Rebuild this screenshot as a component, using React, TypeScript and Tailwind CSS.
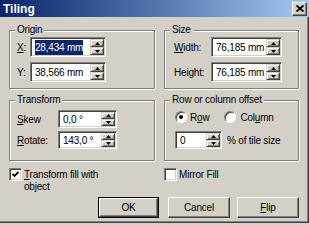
import React from 'react';

const raised =
  'border border-t-white border-l-white border-r-[#404040] border-b-[#404040] shadow-[inset_-1px_-1px_0_#808080]';
const sunken =
  'border border-t-[#808080] border-l-[#808080] border-r-white border-b-white shadow-[inset_1px_1px_0_#404040,inset_-1px_-1px_0_#d4d0c8]';

function Arrow({ up }: { up?: boolean }) {
  return (
    <svg width="5" height="3" viewBox="0 0 5 3">
      <path d={up ? 'M2.5 0L5 3H0z' : 'M0 0H5L2.5 3z'} fill="#000" />
    </svg>
  );
}

function SpinHalf({ up }: { up?: boolean }) {
  return (
    <div className="flex-1 flex items-center justify-center bg-[#d4d0c8] border border-t-[#d4d0c8] border-l-[#d4d0c8] border-r-[#404040] border-b-[#404040] shadow-[inset_1px_1px_0_#fff,inset_-1px_-1px_0_#808080]">
      <Arrow up={up} />
    </div>
  );
}

function SpinBox({ value, size, selected }: { value: string; size: string; selected?: boolean }) {
  return (
    <div className={`${size} ${sunken} bg-white flex items-stretch p-[1px]`}>
      <div className="flex-1 flex items-center pl-[3px] overflow-hidden whitespace-nowrap">
        <span className={selected ? 'bg-[#0a246a] text-white' : 'text-black'}>{value}</span>
      </div>
      <div className="w-[14px] flex flex-col">
        <SpinHalf up />
        <SpinHalf />
      </div>
    </div>
  );
}

function Group({ legend, className, children }: { legend: string; className: string; children: React.ReactNode }) {
  return (
    <fieldset className={`border border-[#808080] shadow-[inset_1px_1px_0_#fff,1px_1px_0_#fff] ${className}`}>
      <legend className="ml-[5px] px-[2px] leading-[12px] bg-[#d4d0c8]">{legend}</legend>
      {children}
    </fieldset>
  );
}

function Check({ checked }: { checked?: boolean }) {
  return (
    <div className={`w-[13px] h-[13px] shrink-0 bg-white ${sunken} flex items-center justify-center`}>
      {checked && (
        <svg width="7" height="7" viewBox="0 0 7 7">
          <path d="M0.5 3 L2.5 5 L6.5 1" stroke="#000" strokeWidth="1.8" fill="none" />
        </svg>
      )}
    </div>
  );
}

function Radio({ checked }: { checked?: boolean }) {
  return (
    <div className="w-[12px] h-[12px] rounded-full bg-white border border-t-[#808080] border-l-[#808080] border-r-white border-b-white shadow-[inset_1px_1px_0_#404040] flex items-center justify-center">
      {checked && <div className="w-[4px] h-[4px] rounded-full bg-black" />}
    </div>
  );
}

function Button({ children, isDefault, className }: { children: React.ReactNode; isDefault?: boolean; className: string }) {
  return (
    <div className={`${className} h-[21px] ${isDefault ? 'border border-black' : ''} flex`}>
      <div className={`flex-1 ${raised} bg-[#d4d0c8] flex items-center justify-center`}>{children}</div>
    </div>
  );
}

export default function App() {
  return (
    <div className="w-[309px] h-[225px] bg-[#d4d0c8] font-['Liberation_Sans',Arial,sans-serif] text-[10px] tracking-[-0.2px] text-black overflow-hidden">
      <div className="h-[223px] flex flex-col">
        {/* Title bar */}
        <div className="h-[17px] bg-gradient-to-r from-[#0a246a] to-[#a6caf0] flex items-center justify-between pl-[3px] pr-[2px]">
          <span className="text-white font-bold text-[12px] tracking-normal">Tiling</span>
          <div className={`w-[15px] h-[14px] bg-[#d4d0c8] ${raised} flex items-center justify-center`}>
            <svg width="8" height="7" viewBox="0 0 8 7">
              <path d="M0.5 0.5L7.5 6.5M7.5 0.5L0.5 6.5" stroke="#000" strokeWidth="1.8" />
            </svg>
          </div>
        </div>

        {/* Body */}
        <div className="flex-1 pl-[9px] border-r border-b border-[#404040] shadow-[inset_-1px_-1px_0_#808080]">
          <div className="grid grid-cols-[146px_135px] gap-x-[9px] gap-y-[5px] mt-[7px]">
            <Group legend="Origin" className="h-[65px]">
              <div className="flex flex-col gap-[5px] pt-[1px] pl-[7px]">
                <div className="flex items-center">
                  <span className="w-[13px]"><span className="underline">X</span>:</span>
                  <SpinBox value="28,434 mm" size="w-[76px] h-[20px]" selected />
                </div>
                <div className="flex items-center">
                  <span className="w-[13px]">Y:</span>
                  <SpinBox value="38,566 mm" size="w-[76px] h-[20px]" />
                </div>
              </div>
            </Group>
            <Group legend="Size" className="h-[65px]">
              <div className="flex flex-col gap-[5px] pt-[1px] pl-[9px]">
                <div className="flex items-center">
                  <span className="w-[37px]"><span className="underline">W</span>idth:</span>
                  <SpinBox value="76,185 mm" size="w-[71px] h-[20px]" />
                </div>
                <div className="flex items-center">
                  <span className="w-[37px]">Height:</span>
                  <SpinBox value="76,185 mm" size="w-[71px] h-[20px]" />
                </div>
              </div>
            </Group>

            <Group legend="Transform" className="h-[67px]">
              <div className="flex flex-col gap-[3px] pt-[4px] pl-[7px]">
                <div className="flex items-center">
                  <span className="w-[41px]"><span className="underline">S</span>kew</span>
                  <SpinBox value="0,0 °" size="w-[59px] h-[18px]" />
                </div>
                <div className="flex items-center">
                  <span className="w-[41px]"><span className="underline">R</span>otate:</span>
                  <SpinBox value="143,0 °" size="w-[59px] h-[18px]" />
                </div>
              </div>
            </Group>
            <Group legend="Row or column offset" className="h-[67px]">
              <div className="flex flex-col gap-[8px] pt-[5px] pl-[10px]">
                <div className="flex items-center h-[12px]">
                  <Radio checked />
                  <span className="ml-[3px]">R<span className="underline">o</span>w</span>
                  <span className="ml-[15px]"><Radio /></span>
                  <span className="ml-[4px]">Col<span className="underline">u</span>mn</span>
                </div>
                <div className="flex items-center">
                  <SpinBox value="0" size="w-[47px] h-[18px]" />
                  <span className="ml-[5px]">% of tile size</span>
                </div>
              </div>
            </Group>
          </div>

          <div className="grid grid-cols-[146px_135px] gap-x-[9px] mt-[7px] h-[28px]">
            <div className="flex items-start">
              <Check checked />
              <div className="ml-[2px] leading-[12px] mt-[1px]">
                <div><span className="underline">T</span>ransform fill with</div>
                <div>object</div>
              </div>
            </div>
            <div className="flex items-start">
              <Check />
              <span className="ml-[2px] leading-[12px] mt-[1px]">Mirror Fill</span>
            </div>
          </div>

          <div className="flex mt-[1px] pl-[89px]">
            <Button isDefault className="w-[61px]">OK</Button>
            <Button className="w-[62px] ml-[9px]">Cancel</Button>
            <Button className="w-[62px] ml-[7px]"><span className="underline">F</span>lip</Button>
          </div>
        </div>
      </div>
    </div>
  );
}
